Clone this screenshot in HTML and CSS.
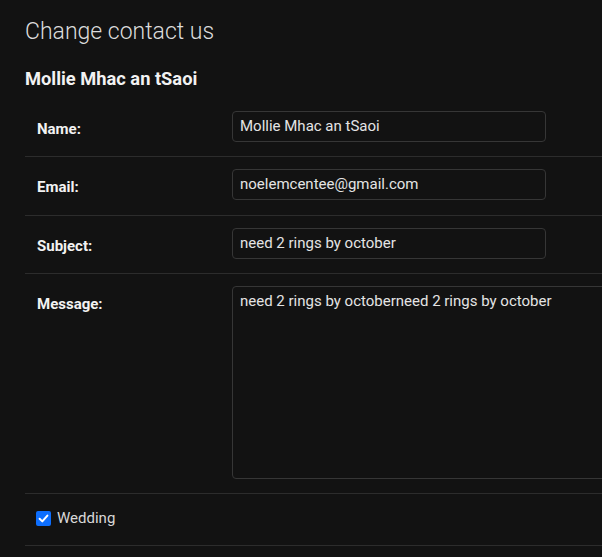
FILE: index.html
```html
<!DOCTYPE html>
<html>
<head>
<meta charset="utf-8">
<link rel="stylesheet" href="styles.css">
</head>
<body>
<div class="page">
  <h2 class="title">Change contact us</h2>
  <h5 class="name">Mollie Mhac an tSaoi</h5>
  <div class="table">
    <div class="row">
      <div class="label">Name:</div>
      <div class="field"><div class="input">Mollie Mhac an tSaoi</div></div>
    </div>
    <div class="row">
      <div class="label">Email:</div>
      <div class="field"><div class="input">noelemcentee@gmail.com</div></div>
    </div>
    <div class="row">
      <div class="label">Subject:</div>
      <div class="field"><div class="input">need 2 rings by october</div></div>
    </div>
    <div class="row">
      <div class="label">Message:</div>
      <div class="field"><div class="textarea">need 2 rings by octoberneed 2 rings by october</div></div>
    </div>
    <div class="row check-row">
      <span class="checkbox"><svg width="15" height="15" viewBox="0 0 15 15"><path d="M3.6 7.8 L6.3 10.4 L11.4 4.6" fill="none" stroke="#fff" stroke-width="2" stroke-linecap="round" stroke-linejoin="round"/></svg></span>
      <span class="check-label">Wedding</span>
    </div>
  </div>
</div>
</body>
</html>
```
FILE: styles.css
```css
html, body {
  margin: 0;
  padding: 0;
  background: #121212;
  overflow: hidden;
}
body {
  font-family: Roboto, "Liberation Sans", sans-serif;
  color: #e6e6e6;
}
.page {
  padding-left: 25px;
  overflow: hidden;
}
.title {
  margin: 18px 0 0;
  font-size: 23px;
  font-weight: 300;
  line-height: 1.2;
  color: #dcdcdc;
}
.name {
  margin: 22px 0 0;
  font-size: 18.3px;
  font-weight: 700;
  line-height: 1.2;
  color: #f2f2f2;
}
.table {
  margin-top: 9px;
}
.row {
  display: grid;
  grid-template-columns: 171px 1fr;
  column-gap: 24px;
  padding: 12px 0 14.5px 12px;
  border-bottom: 1px solid #2c2c2c;
}
.label {
  margin-top: 7px;
  font-size: 15px;
  font-weight: 700;
  line-height: 22.5px;
  color: #f2f2f2;
}
.field {
  min-width: 0;
}
.input, .textarea {
  box-sizing: border-box;
  border: 1px solid #363636;
  border-radius: 4px;
  background: #121212;
  padding: 4px 7px;
  font-size: 15px;
  line-height: 21px;
  color: #e4e4e4;
  white-space: nowrap;
}
.input {
  width: 314px;
  height: 31px;
}
.textarea {
  width: 420px;
  height: 192.5px;
}
.check-row {
  display: flex;
  align-items: center;
  gap: 6px;
  height: 24px;
  padding-left: 11px;
}
.checkbox {
  width: 15px;
  height: 15px;
  border-radius: 2px;
  background: #0d6efd;
  display: block;
}
.checkbox svg {
  display: block;
}
.check-label {
  font-size: 15px;
  color: #d8d8d8;
}
```
